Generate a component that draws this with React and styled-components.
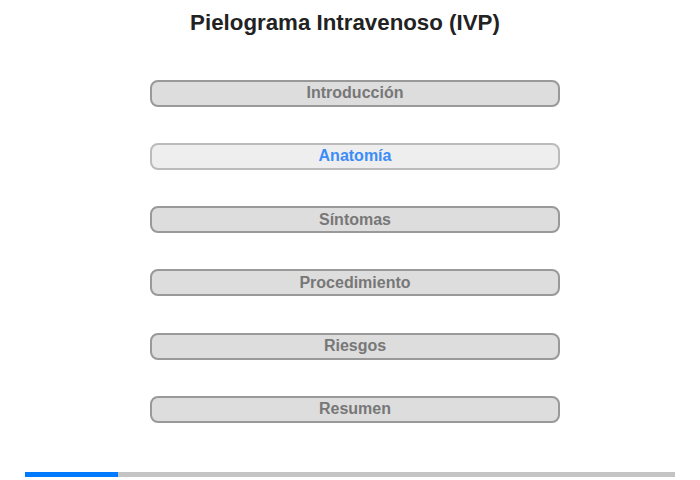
import React, { useState } from 'react'
import styled, { createGlobalStyle } from 'styled-components'

const GlobalStyle = createGlobalStyle`
  body {
    margin: 0;
    background: #fff;
    font-family: 'Liberation Sans', Arial, sans-serif;
  }
`

const sections = [
  'Introducción',
  'Anatomía',
  'Síntomas',
  'Procedimiento',
  'Riesgos',
  'Resumen',
]

const App = () => {
  const [active, setActive] = useState(1)
  return (
    <>
      <GlobalStyle />
      <Page>
        <Title>Pielograma Intravenoso (IVP)</Title>
        <Menu>
          {sections.map((label, i) => (
            <MenuButton
              key={label}
              $active={i === active}
              onClick={() => setActive(i)}
            >
              {label}
            </MenuButton>
          ))}
        </Menu>
        <Progress>
          <ProgressFill style={{ width: `${(active / 7) * 100}%` }} />
        </Progress>
      </Page>
    </>
  )
}

const Page = styled.div`
  width: 700px;
  height: 480px;
  display: flex;
  flex-direction: column;
  align-items: center;
`

const Title = styled.h1`
  margin: 10px 0 0 -10px;
  font-family: 'Liberation Sans', Arial, sans-serif;
  font-size: 22.3px;
  line-height: 26px;
  font-weight: bold;
  color: #222;
`

const Menu = styled.div`
  margin: 43.5px 0 0 10px;
  display: flex;
  flex-direction: column;
  gap: 36.3px;
`

const MenuButton = styled.button`
  width: 410px;
  height: 27px;
  box-sizing: border-box;
  border: 2px solid ${(p) => (p.$active ? '#bbb' : '#999')};
  border-radius: 8px;
  background: ${(p) => (p.$active ? '#eee' : '#ddd')};
  color: ${(p) => (p.$active ? '#3b8cf8' : '#777')};
  font-family: 'Liberation Sans', Arial, sans-serif;
  font-size: 16px;
  font-weight: bold;
  padding: 0;
  cursor: pointer;
`

const Progress = styled.div`
  margin-top: 49.5px;
  width: 650px;
  height: 5px;
  background: #c4c4c4;
`

const ProgressFill = styled.div`
  height: 100%;
  background: #007bff;
`

export default App
